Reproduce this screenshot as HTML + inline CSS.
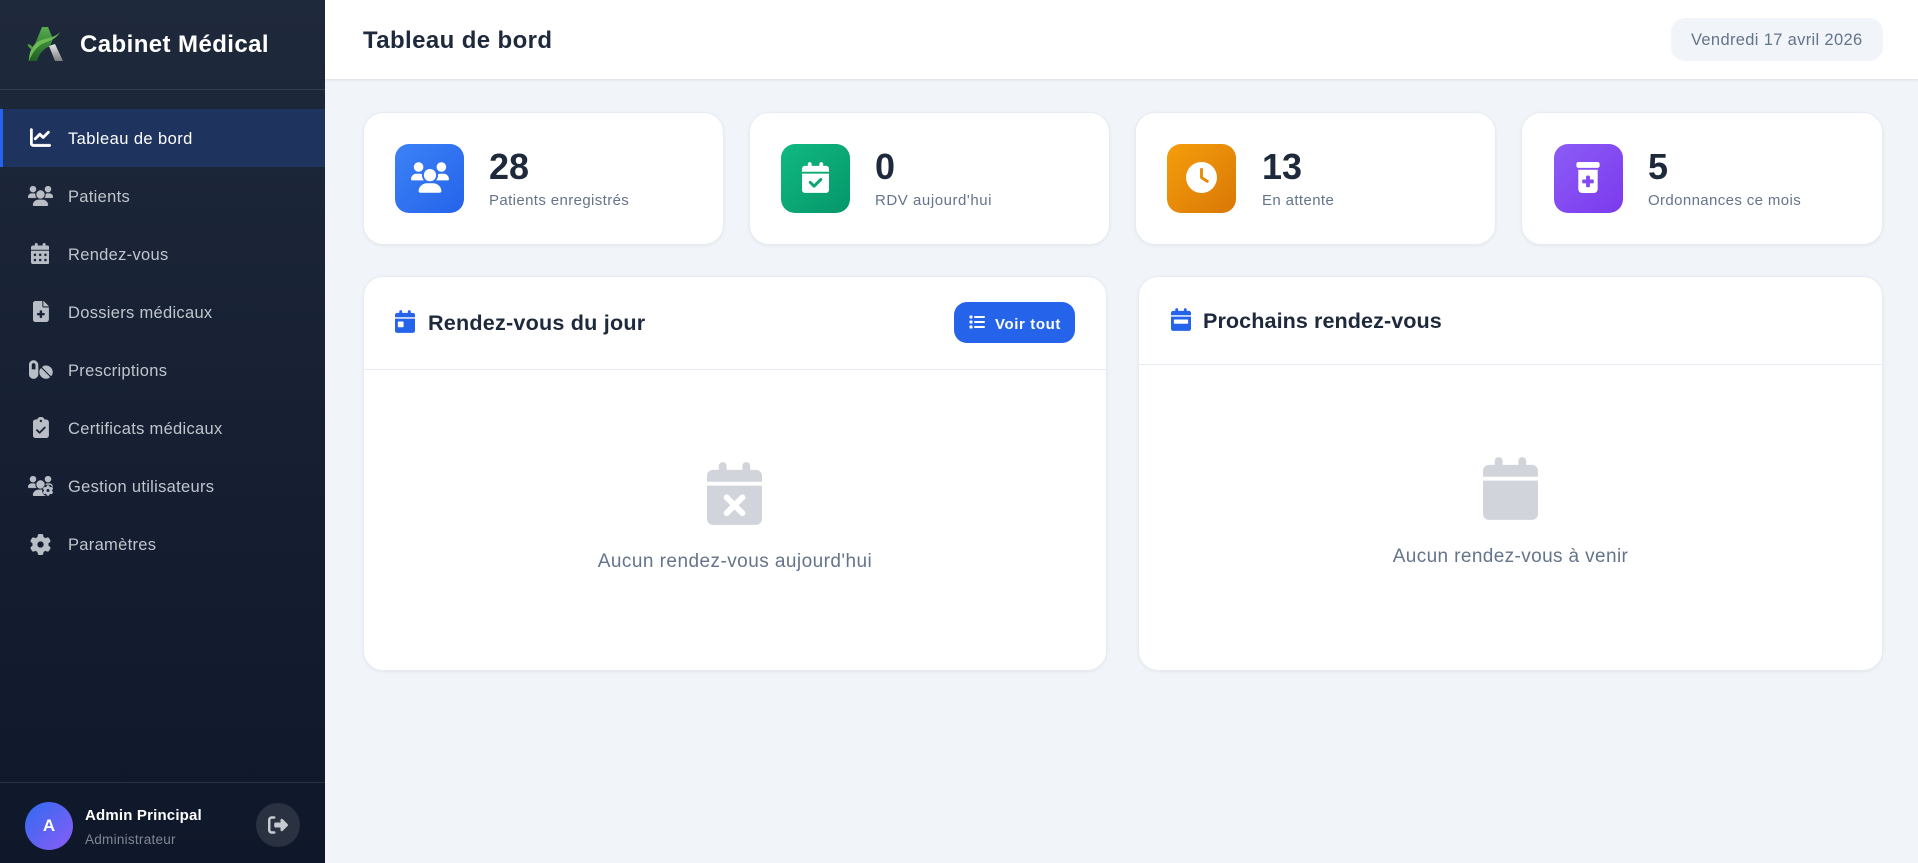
<!DOCTYPE html>
<html lang="fr">
<head>
<meta charset="utf-8">
<title>Tableau de bord - Cabinet Médical</title>
<style>
*{box-sizing:border-box;margin:0;padding:0}
html,body{width:1918px;height:863px;overflow:hidden;background:#f1f5f9;font-family:"Liberation Sans",Arial,sans-serif}
.a{position:absolute}
.t{position:absolute;white-space:nowrap;line-height:30px;height:30px}
svg.i{position:absolute;display:block}
#side{position:absolute;left:0;top:0;width:325px;height:863px;background:linear-gradient(180deg,#1e293b 0%,#0f172a 100%)}
#hdr{position:absolute;left:325px;top:0;width:1593px;height:79px;background:#fff;box-shadow:0 1px 3px rgba(0,0,0,.1)}
.n{color:#c0c5cc;font-size:16.500px;left:68px;letter-spacing:.3px}
.f{fill:#b9bec6;stroke:#b9bec6;stroke-width:7}
.card{position:absolute;top:112px;height:133px;background:#fff;border-radius:20px;border:1px solid #e7ecf3;box-shadow:0 1px 3px rgba(0,0,0,.06)}
.ic{position:absolute;top:144px;width:69px;height:69px;border-radius:14px}
.num{font-size:36px;font-weight:700;color:#1e293b;top:152px}
.lab{font-size:15px;color:#64748b;top:186px;letter-spacing:.38px}
.panel{position:absolute;top:276px;height:395px;background:#fff;border-radius:20px;border:1px solid #e7ecf3;box-shadow:0 1px 3px rgba(0,0,0,.06)}
.pt{font-size:21.600px;font-weight:700;color:#1e293b;letter-spacing:.2px}
.emp{font-size:19px;color:#64748b;letter-spacing:.45px}
</style>
</head>
<body>
<svg width="0" height="0" style="position:absolute">
<defs>
<symbol id="s-users" viewBox="0 0 640 512"><path d="M319.900 320c57.410 0 103.100-46.560 103.100-104c0-57.440-46.540-104-103.100-104c-57.410 0-103.100 46.560-103.100 104C215.900 273.400 262.500 320 319.900 320zM369.900 352H270.100C191.600 352 128 411.700 128 485.300C128 500.100 140.700 512 156.400 512h327.200C499.300 512 512 500.100 512 485.300C512 411.700 448.400 352 369.900 352zM512 160c44.180 0 80-35.820 80-80S556.200 0 512 0c-44.180 0-80 35.820-80 80S467.800 160 512 160zM183.900 216c0-5.449 .9824-10.630 1.609-15.910C174.600 194.100 162.600 192 149.900 192H88.080C39.440 192 0 233.800 0 285.300C0 295.600 7.887 304 17.620 304h199.500C196.700 280.200 183.900 249.700 183.900 216zM128 160c44.180 0 80-35.820 80-80S172.200 0 128 0C83.820 0 48 35.820 48 80S83.820 160 128 160zM551.900 192h-61.840c-12.800 0-24.880 3.037-35.860 8.240C454.800 205.500 455.800 210.600 455.800 216c0 33.710-12.780 64.210-33.160 88h199.700C632.100 304 640 295.600 640 285.300C640 233.800 600.600 192 551.900 192z"/></symbol>
<symbol id="s-gear" viewBox="0 0 512 512"><path d="M495.900 166.600c3.200 8.700 .5 18.400-6.400 24.600l-43.300 39.400c1.100 8.300 1.700 16.800 1.700 25.400s-.6 17.100-1.700 25.400l43.300 39.400c6.900 6.200 9.600 15.900 6.400 24.600c-4.400 11.900-9.700 23.300-15.800 34.300l-4.700 8.100c-6.600 11-14 21.400-22.100 31.200c-5.900 7.200-15.700 9.600-24.500 6.800l-55.700-17.700c-13.400 10.300-28.200 18.900-44 25.400l-12.500 57.100c-2 9.100-9 16.300-18.200 17.800c-13.800 2.300-28 3.500-42.500 3.500s-28.700-1.200-42.500-3.500c-9.200-1.500-16.200-8.700-18.200-17.800l-12.500-57.100c-15.800-6.500-30.600-15.100-44-25.400L83.100 425.900c-8.800 2.800-18.600 .3-24.500-6.800c-8.100-9.800-15.500-20.200-22.100-31.200l-4.700-8.100c-6.100-11-11.400-22.400-15.800-34.300c-3.200-8.700-.5-18.400 6.400-24.600l43.300-39.400C64.600 273.100 64 264.600 64 256s.6-17.100 1.700-25.400L22.400 191.200c-6.900-6.200-9.600-15.900-6.400-24.600c4.400-11.900 9.700-23.300 15.800-34.300l4.700-8.100c6.600-11 14-21.400 22.100-31.200c5.900-7.200 15.700-9.600 24.500-6.800l55.700 17.700c13.400-10.300 28.200-18.900 44-25.400l12.500-57.100c2-9.100 9-16.300 18.200-17.800C227.300 1.200 241.500 0 256 0s28.700 1.200 42.500 3.500c9.200 1.500 16.200 8.700 18.200 17.800l12.500 57.100c15.800 6.500 30.600 15.100 44 25.400l55.700-17.700c8.800-2.800 18.600-.3 24.500 6.800c8.100 9.800 15.500 20.200 22.100 31.200l4.700 8.100c6.100 11 11.400 22.400 15.800 34.300zM256 336a80 80 0 1 0 0-160 80 80 0 1 0 0 160z"/></symbol>
<symbol id="s-cal" viewBox="0 0 448 512"><path d="M128 0c17.700 0 32 14.300 32 32V64H288V32c0-17.700 14.300-32 32-32s32 14.300 32 32V64h48c26.500 0 48 21.500 48 48v48H0V112C0 85.500 21.500 64 48 64H96V32c0-17.700 14.300-32 32-32zM0 192H448V464c0 26.500-21.500 48-48 48H48c-26.500 0-48-21.500-48-48V192z"/></symbol>
</defs>
</svg>

<div id="side"></div>
<svg class="i" style="left:26px;top:26px" width="38" height="36" viewBox="0 0 38 36">
<defs>
<linearGradient id="lg" x1="0" y1="0" x2="0" y2="1"><stop offset="0" stop-color="#55ad4e"/><stop offset="1" stop-color="#1f5f22"/></linearGradient>
<linearGradient id="ls" x1="0" y1="0" x2="0" y2="1"><stop offset="0" stop-color="#e8e8e8"/><stop offset="1" stop-color="#7d7d7d"/></linearGradient>
</defs>
<path d="M16 1H22L27 13L24 20C17 23 13 28 11 35H2Z" fill="url(#lg)"/>
<path d="M23 20L29 18L37 35H29Z" fill="url(#ls)"/>
<path d="M34 6C31 12 24 15 18 17C11 20 6 27 3 35C3 26 6 19 13 15C20 12 29 12 34 6Z" fill="#6cbb55"/>
<path d="M5 23C3 22 2 20 1.500 18C4 18 6 20 7 22C6 23 5.500 23 5 23Z" fill="#4c9c44"/>
</svg>
<div class="t" style="left:80px;top:30px;font-size:24px;font-weight:700;color:#fff;letter-spacing:.42px">Cabinet Médical</div>
<div class="a" style="left:0;top:89px;width:325px;height:1px;background:rgba(255,255,255,.1)"></div>

<div class="a" style="left:0;top:109px;width:325px;height:58px;background:#1e335e;border-left:3px solid #2563eb"></div>

<svg class="i" style="left:30px;top:127px" width="21" height="21" viewBox="0 0 512 512" fill="#fff" stroke="#fff" stroke-width="7"><path d="M64 64c0-17.700-14.300-32-32-32S0 46.300 0 64V400c0 44.200 35.800 80 80 80H480c17.700 0 32-14.300 32-32s-14.300-32-32-32H80c-8.800 0-16-7.200-16-16V64zm406.600 86.600c12.500-12.500 12.500-32.800 0-45.300s-32.800-12.500-45.300 0L320 210.700l-57.400-57.400c-12.500-12.500-32.800-12.500-45.300 0l-112 112c-12.500 12.500-12.500 32.800 0 45.300s32.800 12.500 45.300 0L240 221.300l57.400 57.400c12.500 12.500 32.800 12.500 45.300 0l128-128z"/></svg>
<div class="t n" style="top:124px;color:#fff;letter-spacing:.43px">Tableau de bord</div>

<svg class="i f" style="left:28px;top:186px" width="25" height="20"><use href="#s-users"/></svg>
<div class="t n" style="top:182px">Patients</div>

<svg class="i f" style="left:31px;top:243px" width="18.400" height="21" viewBox="0 0 448 512"><path d="M128 0c17.700 0 32 14.300 32 32V64H288V32c0-17.700 14.300-32 32-32s32 14.300 32 32V64h48c26.500 0 48 21.500 48 48v48H0V112C0 85.500 21.500 64 48 64H96V32c0-17.700 14.300-32 32-32zM0 192H448V464c0 26.500-21.500 48-48 48H48c-26.500 0-48-21.500-48-48V192zm64 80v32c0 8.800 7.200 16 16 16h32c8.800 0 16-7.200 16-16V272c0-8.800-7.200-16-16-16H80c-8.800 0-16 7.200-16 16zm128 0v32c0 8.800 7.200 16 16 16h32c8.800 0 16-7.200 16-16V272c0-8.800-7.200-16-16-16H208c-8.800 0-16 7.200-16 16zm144-16c-8.800 0-16 7.200-16 16v32c0 8.800 7.200 16 16 16h32c8.800 0 16-7.200 16-16V272c0-8.800-7.200-16-16-16H336zM64 400v32c0 8.800 7.200 16 16 16h32c8.800 0 16-7.200 16-16V400c0-8.800-7.200-16-16-16H80c-8.800 0-16 7.200-16 16zm144-16c-8.800 0-16 7.200-16 16v32c0 8.800 7.200 16 16 16h32c8.800 0 16-7.200 16-16V400c0-8.800-7.200-16-16-16H208zm112 16v32c0 8.800 7.200 16 16 16h32c8.800 0 16-7.200 16-16V400c0-8.800-7.200-16-16-16H336c-8.800 0-16 7.200-16 16z"/></svg>
<div class="t n" style="top:240px">Rendez-vous</div>

<svg class="i f" style="left:33px;top:301px" width="15.750" height="21" viewBox="0 0 384 512"><path d="M64 0C28.700 0 0 28.700 0 64V448c0 35.300 28.700 64 64 64H320c35.300 0 64-28.700 64-64V160H256c-17.700 0-32-14.300-32-32V0H64zM256 0V128H384L256 0zM160 240c0-8.800 7.200-16 16-16h32c8.800 0 16 7.200 16 16v48h48c8.800 0 16 7.200 16 16v32c0 8.800-7.200 16-16 16H224v48c0 8.800-7.200 16-16 16H176c-8.800 0-16-7.200-16-16V352H112c-8.800 0-16-7.200-16-16V304c0-8.800 7.200-16 16-16h48V240z"/></svg>
<div class="t n" style="top:298px">Dossiers médicaux</div>

<svg class="i f" style="left:29px;top:359px" width="23.600" height="21" viewBox="0 0 576 512"><path d="M112 96c-26.500 0-48 21.500-48 48V256h96V144c0-26.500-21.500-48-48-48zM0 144C0 82.100 50.100 32 112 32s112 50.100 112 112V368c0 61.900-50.100 112-112 112S0 429.900 0 368V144zM554.900 399.400c-7.100 12.300-23.700 13.100-33.800 3.100L333.500 214.900c-10-10-9.300-26.700 3.100-33.800C360 167.700 387.100 160 416 160c88.400 0 160 71.600 160 160c0 28.900-7.700 56-21.100 79.400zm-59.500 59.500C472 472.300 444.900 480 416 480c-88.400 0-160-71.600-160-160c0-28.900 7.700-56 21.100-79.400c7.100-12.300 23.700-13.100 33.800-3.100L498.500 425.100c10 10 9.300 26.700-3.100 33.800z"/></svg>
<div class="t n" style="top:356px">Prescriptions</div>

<svg class="i f" style="left:33px;top:417px" width="15.750" height="21" viewBox="0 0 384 512"><path d="M192 0c-41.800 0-77.400 26.700-90.500 64H64C28.700 64 0 92.700 0 128V448c0 35.300 28.700 64 64 64H320c35.300 0 64-28.700 64-64V128c0-35.300-28.700-64-64-64H282.500C269.400 26.700 233.800 0 192 0zm0 64a32 32 0 1 1 0 64 32 32 0 1 1 0-64zM305 273L177 401c-9.400 9.400-24.600 9.400-33.900 0L79 337c-9.400-9.400-9.400-24.600 0-33.900s24.600-9.400 33.900 0l47 47L271 239c9.400-9.400 24.600-9.400 33.900 0s9.400 24.600 0 33.900z"/></svg>
<div class="t n" style="top:414px">Certificats médicaux</div>

<svg class="i f" style="left:28px;top:476px" width="25" height="20" viewBox="0 0 640 512"><use href="#s-users" width="640" height="512"/><circle cx="512" cy="371" r="150" fill="#151f33" stroke="none"/><svg x="378" y="237" width="268" height="268" viewBox="0 0 512 512"><use href="#s-gear" width="512" height="512" stroke-width="14"/></svg></svg>
<div class="t n" style="top:472px">Gestion utilisateurs</div>

<svg class="i f" style="left:30px;top:534px" width="21" height="21"><use href="#s-gear"/></svg>
<div class="t n" style="top:530px">Paramètres</div>

<div class="a" style="left:0;top:782px;width:325px;height:1px;background:rgba(255,255,255,.1)"></div>
<div class="a" style="left:25px;top:802px;width:48px;height:48px;border-radius:50%;background:linear-gradient(135deg,#2f6bf0,#8b5cf6);color:#fff;font-weight:700;font-size:17px;line-height:48px;text-align:center">A</div>
<div class="t" style="left:85px;top:801px;font-size:15px;font-weight:700;color:#fff;letter-spacing:.18px">Admin Principal</div>
<div class="t" style="left:85px;top:825px;font-size:13.500px;color:#7f8793;letter-spacing:.27px">Administrateur</div>
<div class="a" style="left:256px;top:803px;width:44px;height:44px;border-radius:50%;background:#2a3241"></div>
<svg class="i" style="left:268px;top:815px" width="20" height="20" viewBox="0 0 512 512" fill="#c6cad0"><path d="M160 416H96c-17.670 0-32-14.330-32-32V128c0-17.670 14.330-32 32-32h64c17.670 0 32-14.330 32-32S177.700 32 160 32H96C42.980 32 0 74.980 0 128v256c0 53.020 42.980 96 96 96h64c17.670 0 32-14.330 32-32S177.700 416 160 416zM502.600 233.400l-128-128c-9.156-9.156-22.910-11.900-34.880-6.938C327.800 103.400 320 115.100 320 128l.0918 63.100L192 192c-17.670 0-32 14.330-32 32v64c0 17.670 14.330 32 32 32l128.100-.0039L320 384c0 12.940 7.797 24.610 19.750 29.560c11.970 4.953 25.720 2.219 34.880-6.938l128-128C515.100 266.100 515.100 245.900 502.600 233.400z"/></svg>

<div id="hdr"></div>
<div class="t" style="left:363px;top:26px;font-size:24px;font-weight:700;color:#1e293b;letter-spacing:.39px">Tableau de bord</div>
<div class="a" style="left:1671px;top:18px;width:212px;height:43px;background:#f1f5f9;border-radius:14px"></div>
<div class="t" style="left:1691px;top:25px;font-size:16.500px;color:#64748b;letter-spacing:.33px">Vendredi 17 avril 2026</div>

<div class="card" style="left:363px;width:361px"></div>
<div class="ic" style="left:395px;background:linear-gradient(135deg,#3b82f6,#2563eb)"></div>
<svg class="i" style="left:411px;top:162px" width="38" height="31" fill="#fff"><use href="#s-users"/></svg>
<div class="t num" style="left:489px">28</div>
<div class="t lab" style="left:489px">Patients enregistrés</div>

<div class="card" style="left:749px;width:361px"></div>
<div class="ic" style="left:781px;background:linear-gradient(135deg,#10b981,#059669)"></div>
<svg class="i" style="left:802px;top:162px" width="27" height="31" viewBox="0 0 448 512" fill="#fff"><path d="M128 0c17.700 0 32 14.300 32 32V64H288V32c0-17.700 14.300-32 32-32s32 14.300 32 32V64h48c26.500 0 48 21.500 48 48v48H0V112C0 85.500 21.500 64 48 64H96V32c0-17.700 14.300-32 32-32zM0 192H448V464c0 26.500-21.500 48-48 48H48c-26.500 0-48-21.500-48-48V192zM329 305c9.400-9.400 9.400-24.600 0-33.900s-24.600-9.400-33.900 0l-95 95-47-47c-9.400-9.400-24.600-9.400-33.900 0s-9.400 24.600 0 33.900l64 64c9.400 9.400 24.600 9.400 33.900 0L329 305z"/></svg>
<div class="t num" style="left:875px">0</div>
<div class="t lab" style="left:875px;letter-spacing:.55px">RDV aujourd'hui</div>

<div class="card" style="left:1135px;width:361px"></div>
<div class="ic" style="left:1167px;background:linear-gradient(135deg,#f59e0b,#d97706)"></div>
<svg class="i" style="left:1186px;top:162px" width="31" height="31" viewBox="0 0 512 512" fill="#fff"><path d="M256 0a256 256 0 1 1 0 512A256 256 0 1 1 256 0zM232 120V256c0 8 4 15.500 10.700 20l96 64c11 7.400 25.900 4.400 33.300-6.700s4.400-25.900-6.700-33.300L280 243.200V120c0-13.300-10.700-24-24-24s-24 10.700-24 24z"/></svg>
<div class="t num" style="left:1262px">13</div>
<div class="t lab" style="left:1262px">En attente</div>

<div class="card" style="left:1521px;width:362px"></div>
<div class="ic" style="left:1554px;background:linear-gradient(135deg,#8b5cf6,#7c3aed)"></div>
<svg class="i" style="left:1576px;top:162px" width="24" height="31" viewBox="0 0 384 512" fill="#fff"><path d="M0 32C0 14.300 14.300 0 32 0H352c17.700 0 32 14.300 32 32V64c0 17.700-14.300 32-32 32H32C14.300 96 0 81.700 0 64V32zm32 96H352V448c0 35.300-28.700 64-64 64H96c-35.300 0-64-28.700-64-64V128zM160 240v48H112c-8.800 0-16 7.200-16 16v32c0 8.800 7.200 16 16 16h48v48c0 8.800 7.200 16 16 16h32c8.800 0 16-7.200 16-16V352h48c8.800 0 16-7.200 16-16V304c0-8.800-7.200-16-16-16H224V240c0-8.800-7.200-16-16-16H176c-8.800 0-16 7.200-16 16z"/></svg>
<div class="t num" style="left:1648px">5</div>
<div class="t lab" style="left:1648px">Ordonnances ce mois</div>

<div class="panel" style="left:363px;width:744px"></div>
<div class="a" style="left:364px;top:369px;width:742px;height:1px;background:#e7ecf3"></div>
<svg class="i" style="left:395px;top:310px" width="20" height="23" viewBox="0 0 448 512" fill="#2563eb"><path d="M128 0c17.700 0 32 14.300 32 32V64H288V32c0-17.700 14.300-32 32-32s32 14.300 32 32V64h48c26.500 0 48 21.500 48 48v48H0V112C0 85.500 21.500 64 48 64H96V32c0-17.700 14.300-32 32-32zM0 192H448V464c0 26.500-21.500 48-48 48H48c-26.500 0-48-21.500-48-48V192zm80 64c-8.800 0-16 7.200-16 16v96c0 8.800 7.200 16 16 16h96c8.800 0 16-7.200 16-16V272c0-8.800-7.200-16-16-16H80z"/></svg>
<div class="t pt" style="left:428px;top:308px">Rendez-vous du jour</div>
<div class="a" style="left:954px;top:302px;width:121px;height:41px;background:#2563eb;border-radius:13px"></div>
<svg class="i" style="left:969px;top:314px" width="16" height="16" viewBox="0 0 512 512" fill="#fff"><path d="M40 48C26.700 48 16 58.700 16 72v48c0 13.300 10.700 24 24 24H88c13.300 0 24-10.700 24-24V72c0-13.300-10.700-24-24-24H40zM192 64c-17.700 0-32 14.300-32 32s14.300 32 32 32H480c17.700 0 32-14.300 32-32s-14.300-32-32-32H192zm0 160c-17.700 0-32 14.300-32 32s14.300 32 32 32H480c17.700 0 32-14.300 32-32s-14.300-32-32-32H192zm0 160c-17.700 0-32 14.300-32 32s14.300 32 32 32H480c17.700 0 32-14.300 32-32s-14.300-32-32-32H192zM16 232v48c0 13.300 10.700 24 24 24H88c13.300 0 24-10.700 24-24V232c0-13.300-10.700-24-24-24H40c-13.300 0-24 10.700-24 24zM40 368c-13.300 0-24 10.700-24 24v48c0 13.300 10.700 24 24 24H88c13.300 0 24-10.700 24-24V392c0-13.300-10.700-24-24-24H40z"/></svg>
<div class="t" style="left:995px;top:310px;font-size:15px;font-weight:700;color:#fff;letter-spacing:.6px">Voir tout</div>
<svg class="i" style="left:707px;top:462px" width="55" height="63" viewBox="0 0 448 512" fill="#d1d5db"><path d="M128 0c17.700 0 32 14.300 32 32V64H288V32c0-17.700 14.300-32 32-32s32 14.300 32 32V64h48c26.500 0 48 21.500 48 48v48H0V112C0 85.500 21.500 64 48 64H96V32c0-17.700 14.300-32 32-32zM0 192H448V464c0 26.500-21.500 48-48 48H48c-26.500 0-48-21.500-48-48V192zM305 305c9.400-9.400 9.400-24.600 0-33.900s-24.600-9.400-33.900 0l-47 47-47-47c-9.400-9.400-24.600-9.400-33.900 0s-9.400 24.600 0 33.900l47 47-47 47c-9.400 9.400-9.400 24.600 0 33.900s24.600 9.400 33.900 0l47-47 47 47c9.400 9.400 24.600 9.400 33.900 0s9.400-24.600 0-33.900l-47-47 47-47z"/></svg>
<div class="t emp" style="left:364px;width:742px;text-align:center;top:547px">Aucun rendez-vous aujourd'hui</div>

<div class="panel" style="left:1138px;width:745px"></div>
<div class="a" style="left:1139px;top:364px;width:743px;height:1px;background:#e7ecf3"></div>
<svg class="i" style="left:1171px;top:308px" width="20" height="23" viewBox="0 0 448 512" fill="#2563eb"><path d="M128 0c17.700 0 32 14.300 32 32V64H288V32c0-17.700 14.300-32 32-32s32 14.300 32 32V64h48c26.500 0 48 21.500 48 48v48H0V112C0 85.500 21.500 64 48 64H96V32c0-17.700 14.300-32 32-32zM0 192H448V464c0 26.500-21.500 48-48 48H48c-26.500 0-48-21.500-48-48V192zm80 64c-8.800 0-16 7.200-16 16v64c0 8.800 7.200 16 16 16H368c8.800 0 16-7.200 16-16V272c0-8.800-7.200-16-16-16H80z"/></svg>
<div class="t pt" style="left:1203px;top:306px;letter-spacing:.06px">Prochains rendez-vous</div>
<svg class="i" style="left:1483px;top:457px" width="55" height="63" fill="#d1d5db"><use href="#s-cal"/></svg>
<div class="t emp" style="left:1139px;width:743px;text-align:center;top:542px;letter-spacing:.38px">Aucun rendez-vous à venir</div>
</body>
</html>
